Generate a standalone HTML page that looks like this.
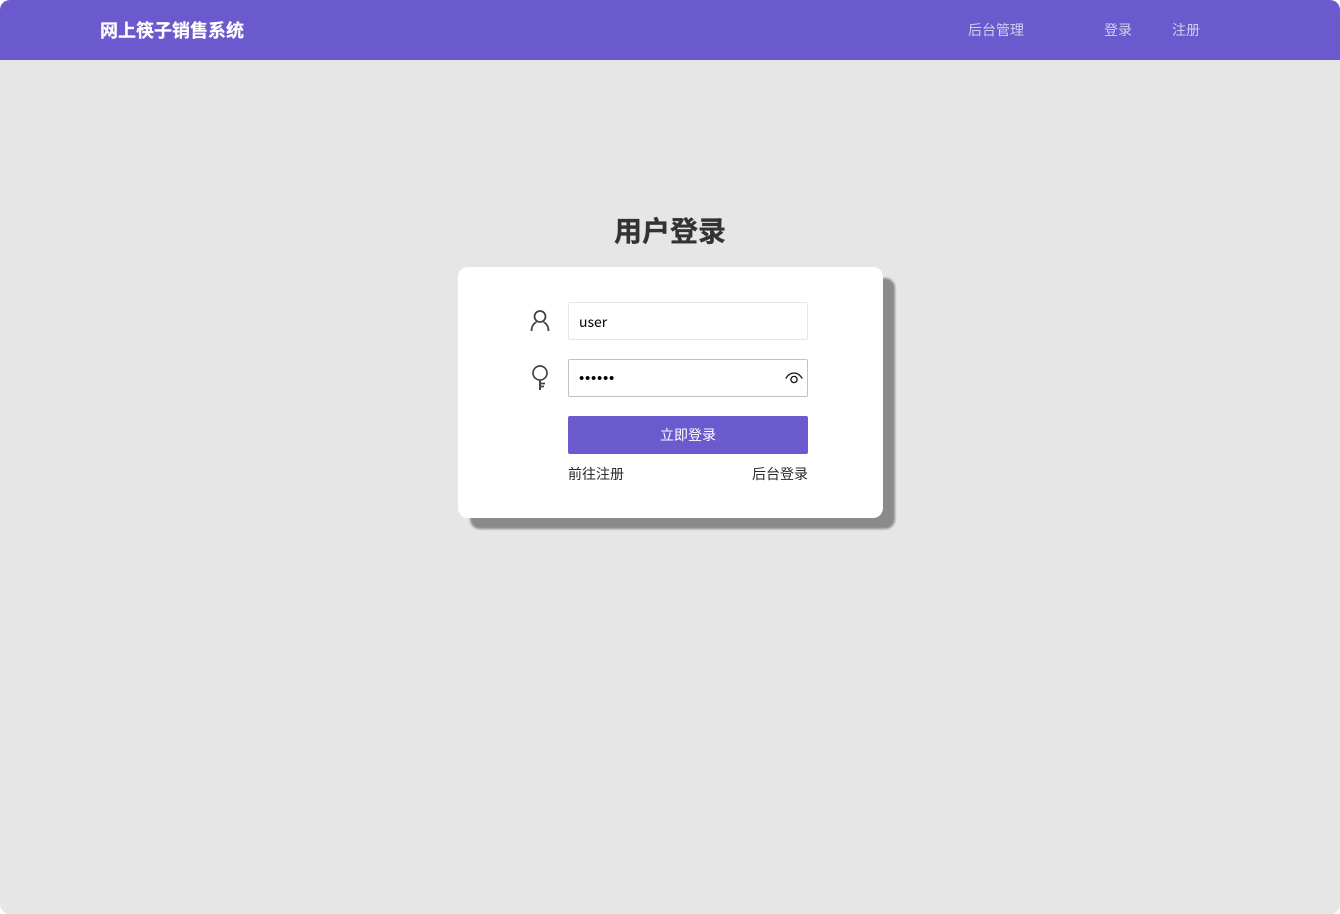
<!DOCTYPE html>
<html lang="zh">
<head>
<meta charset="utf-8">
<title>用户登录</title>
<style>
*{box-sizing:border-box;margin:0;padding:0}
html,body{width:1340px;height:914px;overflow:hidden;background:#fff}
body{font-family:"Liberation Sans","Noto Sans CJK SC",sans-serif;position:relative}
.page{position:absolute;left:0;top:0;width:1340px;height:914px;background:#e6e6e6;border-radius:10px;overflow:hidden}
.head{position:absolute;left:0;top:0;width:1340px;height:60px;background:#6a5acd}
.abs{position:absolute;white-space:nowrap}
.logo{left:100px;top:18px;font-size:18px;line-height:26px;font-weight:bold;color:#fff;-webkit-text-stroke:.2px #fff}
.nav{top:20px;font-size:14px;line-height:20px;color:rgba(255,255,255,.7)}
h1{position:absolute;left:0;width:1340px;top:212px;text-align:center;font-size:28px;line-height:39px;font-weight:bold;color:#333;-webkit-text-stroke:.3px #333}
.card{position:absolute;left:458px;top:267px;width:425px;height:251px;background:#fff;border-radius:10px;box-shadow:12px 11px 2px rgba(0,0,0,.4)}
.inp{position:absolute;left:568px;width:240px;height:38px;background:#fff;border-radius:2px;font-family:"Noto Sans CJK SC",sans-serif;font-size:14px;line-height:38px;padding-left:10px;color:#000}
.pw{font-family:"Liberation Sans",sans-serif;font-size:15px;letter-spacing:.75px;line-height:37px}
.btn{position:absolute;left:568px;top:416px;width:240px;height:38px;background:#6a5acd;border-radius:2px;color:#fff;font-size:14px;line-height:38px;text-align:center}
.link{top:464px;font-size:14px;line-height:20px;color:#2a2a2a}
svg{position:absolute;overflow:visible}
</style>
</head>
<body>
<div class="page">
  <div class="head"></div>
  <div class="abs logo">网上筷子销售系统</div>
  <div class="abs nav" style="left:968px">后台管理</div>
  <div class="abs nav" style="left:1104px">登录</div>
  <div class="abs nav" style="left:1172px">注册</div>
  <h1>用户登录</h1>
  <div class="card"></div>

  <svg style="left:530px;top:310px" width="20" height="22" viewBox="0 0 20 22" fill="none" stroke="#444" stroke-width="1.800">
    <circle cx="10" cy="6.500" r="5.500"/>
    <path d="M1.500 21C1.500 16.500 3.500 13.500 6.500 12M18.500 21C18.500 16.500 16.500 13.500 13.500 12"/>
  </svg>
  <div class="inp" style="top:302px;border:1px solid #e6e6e6">user</div>

  <svg style="left:532px;top:365px" width="16" height="26" viewBox="0 0 16 26" fill="none" stroke="#444" stroke-width="1.700">
    <circle cx="8" cy="8" r="7"/>
    <path d="M8 15V25" stroke-width="2"/>
    <path d="M8 18.500H13M8 21.500H12"/>
  </svg>
  <div class="inp pw" style="top:359px;border:1px solid #c2c2c2">••••••</div>
  <svg style="left:785px;top:372px" width="18" height="13" viewBox="0 0 18 13" fill="none" stroke="#111" stroke-width="1.300">
    <path d="M.7 6.500C3 2.800 6 1 9 1s6 1.800 8.300 5.500"/>
    <circle cx="9" cy="7.500" r="3.100"/>
  </svg>

  <div class="btn">立即登录</div>
  <div class="abs link" style="left:568px">前往注册</div>
  <div class="abs link" style="left:752px">后台登录</div>
</div>
</body>
</html>
